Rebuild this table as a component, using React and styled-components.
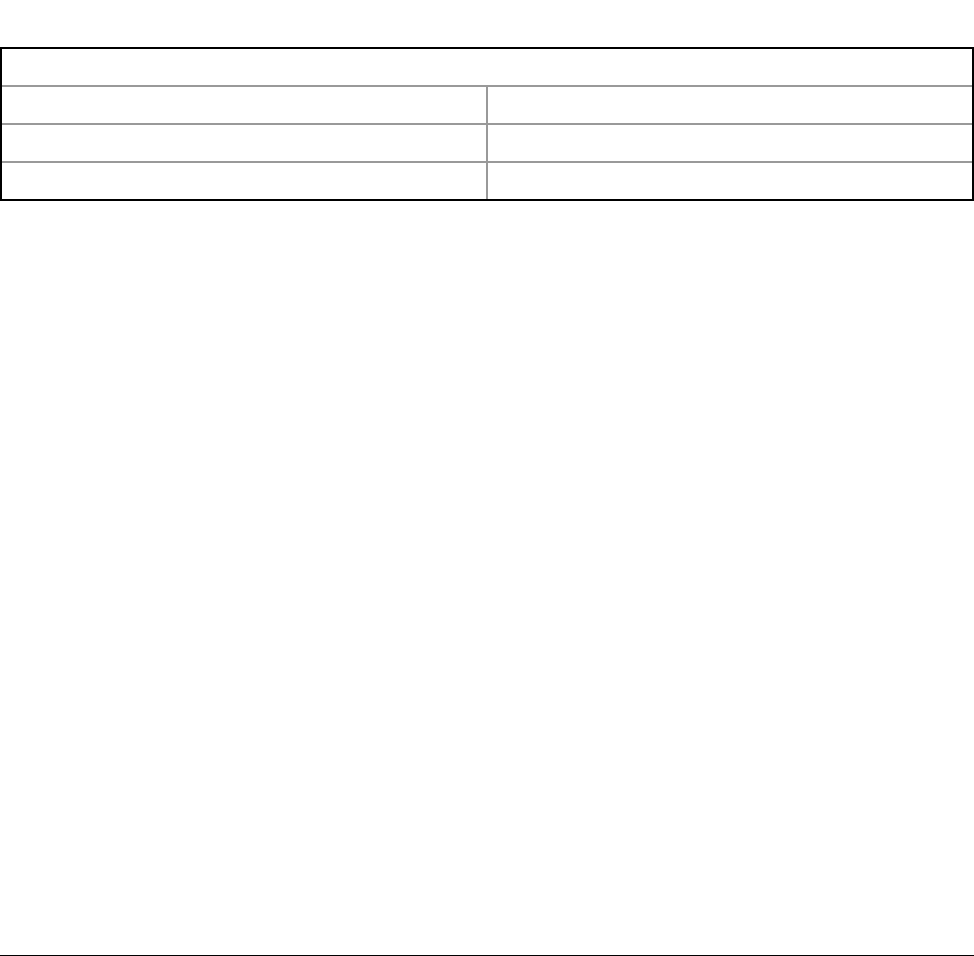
import React from 'react';
import styled, { createGlobalStyle } from 'styled-components';

const GlobalStyle = createGlobalStyle`
  html, body {
    margin: 0;
    padding: 0;
    background: #fff;
    font-family: "Liberation Sans", Arial, sans-serif;
  }
`;

const Page = styled.div`
  display: flex;
  flex-direction: column;
  height: 100vh;
  box-sizing: border-box;
  padding-top: 47px;
  border-bottom: 1px solid #000;
`;

const Table = styled.div`
  display: grid;
  grid-template-columns: 1fr 1fr;
  gap: 2px;
  background: #999;
  border: 2px solid #000;
`;

const Cell = styled.div`
  height: 36px;
  background: #fff;
  grid-column: ${(p) => (p.$span ? '1 / -1' : 'auto')};
`;

const rows = [0, 1, 2];

const App = () => {
  return (
    <>
      <GlobalStyle />
      <Page>
        <Table>
          <Cell $span />
          {rows.map((r) => (
            <React.Fragment key={r}>
              <Cell />
              <Cell />
            </React.Fragment>
          ))}
        </Table>
      </Page>
    </>
  );
};

export default App;
